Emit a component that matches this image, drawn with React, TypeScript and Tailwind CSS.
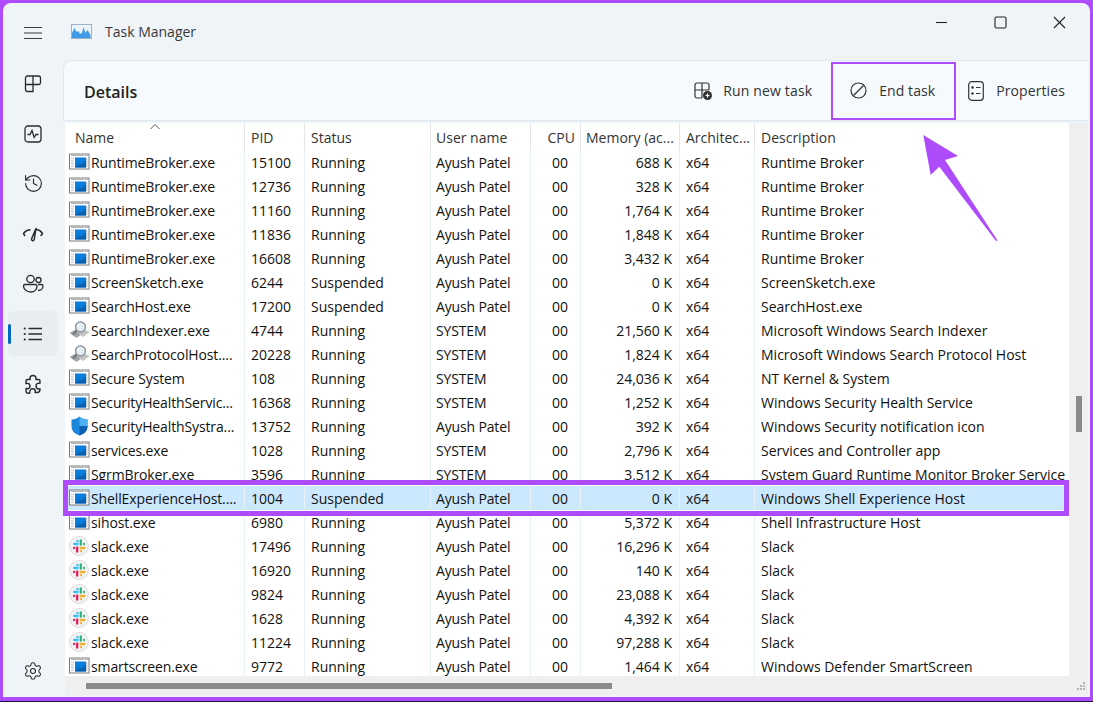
import { History, Settings } from 'lucide-react';

type Row = {
  name: string;
  icon: 'exe' | 'search' | 'shield' | 'slack';
  pid: string;
  status: string;
  user: string;
  memory: string;
  description: string;
  selected?: boolean;
};

const rows: Row[] = [
  { name: 'RuntimeBroker.exe', icon: 'exe', pid: '15100', status: 'Running', user: 'Ayush Patel', memory: '688 K', description: 'Runtime Broker' },
  { name: 'RuntimeBroker.exe', icon: 'exe', pid: '12736', status: 'Running', user: 'Ayush Patel', memory: '328 K', description: 'Runtime Broker' },
  { name: 'RuntimeBroker.exe', icon: 'exe', pid: '11160', status: 'Running', user: 'Ayush Patel', memory: '1,764 K', description: 'Runtime Broker' },
  { name: 'RuntimeBroker.exe', icon: 'exe', pid: '11836', status: 'Running', user: 'Ayush Patel', memory: '1,848 K', description: 'Runtime Broker' },
  { name: 'RuntimeBroker.exe', icon: 'exe', pid: '16608', status: 'Running', user: 'Ayush Patel', memory: '3,432 K', description: 'Runtime Broker' },
  { name: 'ScreenSketch.exe', icon: 'exe', pid: '6244', status: 'Suspended', user: 'Ayush Patel', memory: '0 K', description: 'ScreenSketch.exe' },
  { name: 'SearchHost.exe', icon: 'exe', pid: '17200', status: 'Suspended', user: 'Ayush Patel', memory: '0 K', description: 'SearchHost.exe' },
  { name: 'SearchIndexer.exe', icon: 'search', pid: '4744', status: 'Running', user: 'SYSTEM', memory: '21,560 K', description: 'Microsoft Windows Search Indexer' },
  { name: 'SearchProtocolHost....', icon: 'search', pid: '20228', status: 'Running', user: 'SYSTEM', memory: '1,824 K', description: 'Microsoft Windows Search Protocol Host' },
  { name: 'Secure System', icon: 'exe', pid: '108', status: 'Running', user: 'SYSTEM', memory: '24,036 K', description: 'NT Kernel & System' },
  { name: 'SecurityHealthServic...', icon: 'exe', pid: '16368', status: 'Running', user: 'SYSTEM', memory: '1,252 K', description: 'Windows Security Health Service' },
  { name: 'SecurityHealthSystra...', icon: 'shield', pid: '13752', status: 'Running', user: 'Ayush Patel', memory: '392 K', description: 'Windows Security notification icon' },
  { name: 'services.exe', icon: 'exe', pid: '1028', status: 'Running', user: 'SYSTEM', memory: '2,796 K', description: 'Services and Controller app' },
  { name: 'SgrmBroker.exe', icon: 'exe', pid: '3596', status: 'Running', user: 'SYSTEM', memory: '3,512 K', description: 'System Guard Runtime Monitor Broker Service' },
  { name: 'ShellExperienceHost....', icon: 'exe', pid: '1004', status: 'Suspended', user: 'Ayush Patel', memory: '0 K', description: 'Windows Shell Experience Host', selected: true },
  { name: 'sihost.exe', icon: 'exe', pid: '6980', status: 'Running', user: 'Ayush Patel', memory: '5,372 K', description: 'Shell Infrastructure Host' },
  { name: 'slack.exe', icon: 'slack', pid: '17496', status: 'Running', user: 'Ayush Patel', memory: '16,296 K', description: 'Slack' },
  { name: 'slack.exe', icon: 'slack', pid: '16920', status: 'Running', user: 'Ayush Patel', memory: '140 K', description: 'Slack' },
  { name: 'slack.exe', icon: 'slack', pid: '9824', status: 'Running', user: 'Ayush Patel', memory: '23,088 K', description: 'Slack' },
  { name: 'slack.exe', icon: 'slack', pid: '1628', status: 'Running', user: 'Ayush Patel', memory: '4,392 K', description: 'Slack' },
  { name: 'slack.exe', icon: 'slack', pid: '11224', status: 'Running', user: 'Ayush Patel', memory: '97,288 K', description: 'Slack' },
  { name: 'smartscreen.exe', icon: 'exe', pid: '9772', status: 'Running', user: 'Ayush Patel', memory: '1,464 K', description: 'Windows Defender SmartScreen' },
];

function ExeIcon() {
  return (
    <svg width="21" height="18" viewBox="0 0 21 18" className="shrink-0">
      <rect x="0.5" y="1" width="19.500" height="15" fill="#fff" stroke="#7b7b7b" />
      <path d="M2 2.500h13M16 2.500h3M2 5.500h2.500M2 8h2.500M2 10.500h2.500M2 13h2.500M17.800 5v9" stroke="#a9b4bf" />
      <rect x="6" y="4.500" width="11" height="10" fill="#0a7cdc" />
      <path d="M6 14.500l4-4 3 1 4-4v7z" fill="#0a5fb0" />
    </svg>
  );
}

function SearchIcon() {
  return (
    <svg width="21" height="18" viewBox="0 0 21 18" className="shrink-0">
      <path d="M0.500 12l7-4 7 4-7 5z" fill="#a3a6a9" />
      <path d="M8 11l6-3 6.500 3-6.500 5z" fill="#c0c2c4" />
      <circle cx="11.500" cy="6" r="5" fill="#e4edf4" stroke="#8a959d" strokeWidth="1.400" />
      <path d="M8.500 5a3 3 0 0 1 5-1.500" stroke="#fff" fill="none" />
      <path d="M7.500 10L4 13.500" stroke="#6f7478" strokeWidth="2" />
    </svg>
  );
}

function ShieldIcon() {
  return (
    <svg width="21" height="20" viewBox="0 0 21 20" className="shrink-0">
      <path d="M10.500 0.500c2 1.800 5 3 8 3v7c0 4.500-3.500 7.500-8 9-4.500-1.500-8-4.500-8-9v-7c3 0 6-1.200 8-3z" fill="#1d87dc" />
      <path d="M10.500 0.500c2 1.800 5 3 8 3v6.500h-8z" fill="#4db2f2" />
      <path d="M10.500 10h8v0.500c0 4.500-3.500 7.500-8 9z" fill="#0f5fb5" />
    </svg>
  );
}

function SlackIcon() {
  return (
    <svg width="20" height="20" viewBox="0 0 20 20" className="mr-[1px] shrink-0">
      <circle cx="10" cy="10" r="9.500" fill="#f3f3f3" stroke="#dcdcdc" />
      <g fill="none" strokeLinecap="round" strokeWidth="2.300">
        <path d="M5.200 8h3.600M8.500 4.800v.4" stroke="#36c5f0" />
        <path d="M11.800 4.500v4.200M15 8h.1" stroke="#2eb67d" />
        <path d="M11.500 12h4M12 15.200v.1" stroke="#ecb22e" />
        <path d="M8.200 11.500v4.200M5 12h.1" stroke="#e01e5a" />
      </g>
    </svg>
  );
}

function RowIcon({ kind }: { kind: Row['icon'] }) {
  if (kind === 'search') return <SearchIcon />;
  if (kind === 'shield') return <ShieldIcon />;
  if (kind === 'slack') return <SlackIcon />;
  return <ExeIcon />;
}

function NavButton({ children, active }: { children: React.ReactNode; active?: boolean }) {
  return (
    <div className={active ? 'relative flex h-[45px] w-[50px] items-center justify-center rounded-md bg-[#e8edf2]' : 'flex h-[45px] w-[50px] items-center justify-center'}>
      {active && <span className="absolute left-0 top-[13px] h-[20px] w-[3px] rounded-full bg-[#0067c0]" />}
      {children}
    </div>
  );
}

function AppLogo() {
  return (
    <svg width="21" height="15" viewBox="0 0 21 15">
      <rect x="0.500" y="0.500" width="20" height="14" fill="#eaf2fa" stroke="#9db3c6" />
      <path d="M1 14V9l2.500-5 2 4 2-1 1.500 3 2-1 1.500-6 2 6 2-3 3 5v3z" fill="#3f9be6" />
    </svg>
  );
}

export default function App() {
  return (
    <div className="h-[702px] w-[1093px] overflow-hidden border-b border-[#1d1440] bg-[#ae4bfb] pl-[3px] pr-[3px] pt-[3px] font-['Open_Sans','Noto_Sans',sans-serif] text-[14px] text-[#111]">
      <div className="relative flex h-[694px] flex-col rounded-t-lg bg-[#eff4f9]">
        {/* title bar */}
        <div className="flex h-[57px] shrink-0 items-center">
          <div className="flex w-[61px] justify-center pt-[2px] pr-[1px]">
            <svg width="20" height="16" viewBox="0 0 20 16" stroke="#3a3a3a" strokeWidth="1.100">
              <path d="M1 2.500h18M1 8h18M1 13.500h18" />
            </svg>
          </div>
          <div className="ml-[7px] flex items-center gap-[13px] pb-[1px]">
            <AppLogo />
            <span className="text-[14px] text-[#3a3a3a]">Task Manager</span>
          </div>
          <div className="ml-auto mr-[24px] flex items-center gap-[46px] pb-[18px]">
            <svg width="13" height="13" viewBox="0 0 13 13" stroke="#222" strokeWidth="1.100">
              <path d="M1 6.500h11" />
            </svg>
            <svg width="13" height="13" viewBox="0 0 13 13" fill="none" stroke="#222" strokeWidth="1.100">
              <rect x="1" y="1" width="11" height="11" rx="1.500" />
            </svg>
            <svg width="13" height="13" viewBox="0 0 13 13" stroke="#222" strokeWidth="1.100">
              <path d="M1 1l11 11M12 1L1 12" />
            </svg>
          </div>
        </div>

        <div className="flex min-h-0 flex-1">
          {/* sidebar */}
          <aside className="flex w-[60px] shrink-0 flex-col items-start pl-[5px] pt-[1px] text-[#2b2b2b]">
            <NavButton>
              <svg width="20" height="20" viewBox="0 0 20 20" fill="none" stroke="currentColor" strokeWidth="1.300">
                <path d="M10 10.500H2.500V4a2 2 0 0 1 2-2H10zM10 2h5.500a2 2 0 0 1 2 2v4a2 2 0 0 1-2 2.500H10M2.500 10.500V15.500a2 2 0 0 0 2 2H10v-7" />
              </svg>
            </NavButton>
            <div className="h-[5px]" />
            <NavButton>
              <svg width="20" height="20" viewBox="0 0 20 20" fill="none" stroke="currentColor" strokeWidth="1.300">
                <rect x="2" y="2" width="16" height="16" rx="3" />
                <path d="M4.500 10.500h2.500l2-4 2.200 7 1.800-3h2.500" />
              </svg>
            </NavButton>
            <div className="h-[5px]" />
            <NavButton>
              <History size={21} strokeWidth={1.300} />
            </NavButton>
            <div className="h-[5px]" />
            <NavButton>
              <svg width="22" height="20" viewBox="0 0 22 20" fill="none" stroke="currentColor" strokeWidth="1.500" strokeLinecap="round" strokeLinejoin="round">
                <path d="M1.500 9.500l1.200 2M1.500 9.500c1.500-2.300 4-3.500 6.500-3.800M14.500 5.500c2.500.3 4.500 1.700 6 4l-1.500 2" />
                <path d="M14 4.500L9.700 14.500c-.8 2 1.500 3 2.500 1.200z" />
              </svg>
            </NavButton>
            <div className="h-[5px]" />
            <NavButton>
              <svg width="21" height="20" viewBox="0 0 21 20" fill="none" stroke="currentColor" strokeWidth="1.300">
                <circle cx="7.500" cy="5" r="3.700" />
                <circle cx="15.500" cy="6" r="2.500" />
                <path d="M2 10.500h10.500a1.500 1.500 0 0 1 1.500 1.500c0 3.500-2.500 6-6.200 6-3.800 0-7.300-2.500-7.300-6 0-1 .7-1.500 1.500-1.500z" />
                <path d="M15 10.500h3.500a1.500 1.500 0 0 1 1.500 1.500c0 2.500-2 4.500-5 4.500" />
              </svg>
            </NavButton>
            <div className="h-[5px]" />
            <NavButton active>
              <svg width="20" height="14" viewBox="0 0 20 14" fill="none" stroke="currentColor" strokeWidth="1.300">
                <circle cx="1.800" cy="1.500" r="1.100" fill="currentColor" stroke="none" />
                <circle cx="1.800" cy="7" r="1.100" fill="currentColor" stroke="none" />
                <circle cx="1.800" cy="12.500" r="1.100" fill="currentColor" stroke="none" />
                <path d="M5.500 1.500H19M5.500 7H19M5.500 12.500H19" />
              </svg>
            </NavButton>
            <div className="h-[5px]" />
            <NavButton>
              <svg width="20" height="20" viewBox="0 0 20 20" fill="none" stroke="currentColor" strokeWidth="1.400" strokeLinejoin="round">
                <path d="M10 1.500c1.800 0 3 1.300 3 3 0 .4 0 .6-.2 1h2.700a1.500 1.500 0 0 1 1.500 1.500v2.300c-.4-.1-.7-.2-1-.2-1.800 0-3 1.200-3 2.900s1.200 3 3 3c.3 0 .6 0 1-.2v.7a3 3 0 0 1-3 3H12c.2-.5.300-.8.300-1.200 0-1.600-1.200-2.600-2.800-2.600S6.700 16.700 6.700 18.300c0 .3 0 .6.100.9H5.500a2.500 2.500 0 0 1-2.500-2.500v-2.300c.5.300.9.400 1.300.4 1.600 0 2.700-1.100 2.700-2.700S5.900 9.400 4.300 9.400c-.4 0-.8 0-1.300.3V7a1.500 1.500 0 0 1 1.500-1.500h2.700c-.2-.4-.2-.6-.2-1 0-1.700 1.200-3 3-3z" />
              </svg>
            </NavButton>
            <div className="mt-auto mb-[4px] flex h-[45px] w-[50px] items-center justify-center">
              <Settings size={20} strokeWidth={1.300} />
            </div>
          </aside>

          {/* main panel */}
          <main className="mb-[2px] flex min-w-0 flex-1 flex-col">
            <header className="flex h-[61px] shrink-0 items-center rounded-tl-lg border-l border-t border-b border-[#e2e7ec] bg-[#f7fafd] pl-[20px] text-[14px] text-[#333]">
              <h1 className="mt-[2px] text-[16px] font-semibold text-[#222]">Details</h1>
              <div className="ml-auto flex items-center">
                <div className="flex items-center gap-[11px] pr-[19px]">
                  <svg width="18" height="18" viewBox="0 0 18 18" fill="none" stroke="#333" strokeWidth="1.200">
                    <path d="M8 16H3a2 2 0 0 1-2-2V3a2 2 0 0 1 2-2h10a2 2 0 0 1 2 2v5M1 8h14M8 1v15" />
                    <circle cx="13.500" cy="13.500" r="4.500" fill="#333" stroke="none" />
                    <path d="M11.500 13.500h4M13.500 11.500v4" stroke="#fff" />
                  </svg>
                  <span className="tracking-[0.15px]">Run new task</span>
                </div>
                <div className="relative flex h-[58px] w-[125px] items-center justify-center gap-[12px] border-2 border-[#ae4bfb] pr-[2px]">
                  <svg width="17" height="17" viewBox="0 0 17 17" fill="none" stroke="#333" strokeWidth="1.200">
                    <circle cx="8.500" cy="8.500" r="7.500" />
                    <path d="M3.500 13.500l10-10" />
                  </svg>
                  <span className="tracking-[0.1px]">End task</span>
                </div>
                <div className="flex items-center gap-[12px] pl-[12px] pr-[23px]">
                  <svg width="16" height="20" viewBox="0 0 16 20" fill="none" stroke="#333" strokeWidth="1.200">
                    <rect x="0.700" y="0.700" width="14.600" height="18.600" rx="3" />
                    <circle cx="4.500" cy="6.500" r="1.300" fill="#333" stroke="none" />
                    <circle cx="4.500" cy="12.500" r="1.300" fill="#333" stroke="none" />
                    <path d="M8 6.500h4.500M8 12.500h4.500" />
                  </svg>
                  <span className="tracking-[0.1px]">Properties</span>
                </div>
              </div>
            </header>

            <div className="flex min-h-0 flex-1 pl-[2px] pt-[2px]">
              <div className="flex min-w-0 flex-1 flex-col">
                {/* table */}
                <div className="flex min-h-0 flex-1 flex-col overflow-y-clip bg-white">
                  <div className="relative flex h-[27px] shrink-0 items-center text-[#333]">
                    <svg width="12" height="7" viewBox="0 0 12 7" fill="none" stroke="#555" className="absolute left-[84px] top-[0px]">
                      <path d="M1.500 6l4.500-4.500 4.500 4.500" />
                    </svg>
                    <div className="flex h-full w-[180px] items-end border-r border-[#e4e4e4] pl-[10px] leading-[24px]">Name</div>
                    <div className="flex h-full w-[60px] items-end border-r border-[#e4e4e4] pl-[6px] leading-[24px]">PID</div>
                    <div className="flex h-full w-[126px] items-end border-r border-[#e4e4e4] pl-[6px] leading-[24px]">Status</div>
                    <div className="flex h-full w-[100px] items-end border-r border-[#e4e4e4] pl-[5px] leading-[24px]">User name</div>
                    <div className="flex h-full w-[50px] items-end justify-end border-r border-[#e4e4e4] pr-[5px] leading-[24px]">CPU</div>
                    <div className="flex h-full w-[99px] items-end overflow-hidden whitespace-nowrap border-r border-[#e4e4e4] pl-[5px] leading-[24px]">Memory (ac...</div>
                    <div className="flex h-full w-[75px] items-end overflow-hidden whitespace-nowrap border-r border-[#e4e4e4] pl-[6px] leading-[24px]">Architec...</div>
                    <div className="flex h-full flex-1 items-end pl-[6px] leading-[24px]">Description</div>
                  </div>
                  {rows.map((row, i) => (
                    <div key={i} className={row.selected ? 'relative flex h-[24px] shrink-0 items-center bg-[#cce8ff] whitespace-nowrap' : 'relative flex h-[24px] shrink-0 items-center whitespace-nowrap'}>
                      <div className="flex h-full w-[180px] items-center gap-[1px] overflow-hidden border-r border-[#e8f0f9] pl-[4px]">
                        <RowIcon kind={row.icon} />
                        <span className="tracking-[-0.12px]">{row.name}</span>
                      </div>
                      <div className="flex h-full w-[60px] items-center border-r border-[#e8f0f9] pl-[6px]">{row.pid}</div>
                      <div className="flex h-full w-[126px] items-center border-r border-[#e8f0f9] pl-[6px]">{row.status}</div>
                      <div className="flex h-full w-[100px] items-center border-r border-[#e8f0f9] pl-[5px]">
                        <span className="tracking-[-0.15px]">{row.user}</span>
                      </div>
                      <div className="flex h-full w-[50px] items-center justify-end border-r border-[#e8f0f9] pr-[12px]">00</div>
                      <div className="flex h-full w-[99px] items-center justify-end border-r border-[#e8f0f9] pr-[7px]">{row.memory}</div>
                      <div className="flex h-full w-[75px] items-center border-r border-[#e8f0f9] pl-[6px]">x64</div>
                      <div className="flex h-full flex-1 items-center overflow-hidden pl-[6px]">{row.description}</div>
                      {row.selected && <div className="absolute -bottom-[6px] -left-[2px] -top-[6px] right-0 z-10 border-[5px] border-[#ae4bfb]" />}
                    </div>
                  ))}
                </div>
                {/* horizontal scrollbar */}
                <div className="flex h-[19px] shrink-0 items-center bg-[#efefef] pl-[21px]">
                  <div className="h-[6px] w-[526px] bg-[#8a8a8a]" />
                </div>
              </div>
              {/* vertical scrollbar */}
              <div className="relative w-[19px] shrink-0 bg-[#efefef]">
                <div className="absolute left-[7px] top-[273px] h-[36px] w-[6px] bg-[#8a8a8a]" />
                <svg width="14" height="14" viewBox="0 0 14 14" fill="#b4b4b4" className="absolute bottom-[0px] right-0">
                  <rect x="9" y="1" width="2" height="2" />
                  <rect x="6" y="4" width="2" height="2" />
                  <rect x="9" y="4" width="2" height="2" />
                  <rect x="3" y="7" width="2" height="2" />
                  <rect x="6" y="7" width="2" height="2" />
                  <rect x="9" y="7" width="2" height="2" />
                </svg>
              </div>
            </div>
          </main>
          <div className="w-[2px] shrink-0" />
        </div>
      </div>
      {/* annotation arrow */}
      <svg width="1093" height="702" viewBox="0 0 1093 702" className="pointer-events-none absolute left-0 top-0 z-20">
        <path d="M923.300 135L958 156 945 160 997.500 240.500 996 241 939.300 166.700 930.700 175z" fill="#ae4bfb" />
      </svg>
    </div>
  );
}
